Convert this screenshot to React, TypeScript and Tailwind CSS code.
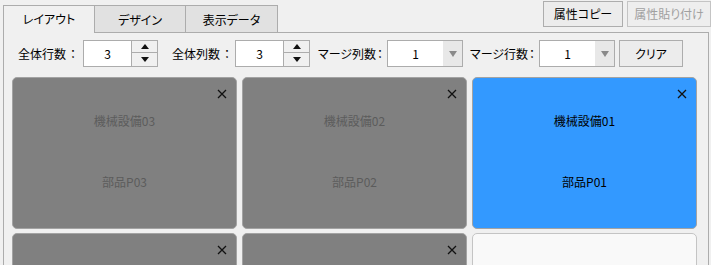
import React from "react";

const font = "font-['Noto_Sans_CJK_JP',sans-serif] [font-feature-settings:'palt']";

function Label({ text, className, gap }: { text: string; className: string; gap: string }) {
  return (
    <div className={`shrink-0 whitespace-nowrap ${className}`}>
      {text}
      <span className={gap}>：</span>
    </div>
  );
}

function Spinner({ value }: { value: string }) {
  return (
    <div className="flex h-[27px] w-[75px] shrink-0 border border-[#acacac] bg-white">
      <div className="flex flex-1 items-center justify-center text-[12px] text-black">{value}</div>
      <div className="flex w-[26px] flex-col border-l border-[#acacac] bg-[#f0f0f0]">
        <div className="flex h-[12px] items-center justify-center border-b border-[#acacac]">
          <svg width="8" height="5" viewBox="0 0 8 5"><path d="M0 5 L4 0 L8 5 Z" fill="#111" /></svg>
        </div>
        <div className="flex flex-1 items-center justify-center">
          <svg width="8" height="5" viewBox="0 0 8 5"><path d="M0 0 L4 5 L8 0 Z" fill="#111" /></svg>
        </div>
      </div>
    </div>
  );
}

function Combo({ value }: { value: string }) {
  return (
    <div className="flex h-[27px] w-[76px] shrink-0 border border-[#acacac] bg-white">
      <div className="flex flex-1 items-center justify-center text-[12px] text-black">{value}</div>
      <div className="flex w-[19px] items-center justify-center bg-[#e8e8e8]">
        <svg width="8" height="6" viewBox="0 0 8 6"><path d="M0 0 L8 0 L4 6 Z" fill="#8a8a8a" /></svg>
      </div>
    </div>
  );
}

function CloseX() {
  return (
    <svg width="10" height="10" viewBox="0 0 10 10">
      <path d="M1 1 L9 9 M9 1 L1 9" stroke="#111" strokeWidth="1.3" />
    </svg>
  );
}

function Card({ title, part, kind }: { title?: string; part?: string; kind: "gray" | "blue" | "empty" }) {
  const bg =
    kind === "gray"
      ? "bg-[#808080] border-[#a3a3a3]"
      : kind === "blue"
      ? "bg-[#3399ff] border-[#a3a3a3]"
      : "bg-[#f9f9f9] border-[#c4c4c4]";
  const txt = kind === "blue" ? "text-black" : "text-[#5c5c5c]";
  return (
    <div className={`relative flex h-[152px] flex-col items-center rounded-[5px] border ${bg}`}>
      {kind !== "empty" && (
        <div className="absolute right-[9px] top-[11px]">
          <CloseX />
        </div>
      )}
      {title && (
        <>
          <div className={`mt-[34px] h-[18px] text-[12px] leading-[18px] ${txt}`}>{title}</div>
          <div className={`mt-[43px] h-[18px] text-[12px] leading-[18px] ${txt}`}>{part}</div>
        </>
      )}
    </div>
  );
}

export default function App() {
  return (
    <div className={`h-[265px] w-[711px] overflow-hidden bg-[#f0f0f0] text-[12px] text-black ${font}`}>
      <div className="flex h-[32px] justify-between">
        <div className="flex items-start pl-[3px] pt-[5px]">
          <div className="relative z-10 -mb-px flex h-[28px] w-[92px] items-center justify-center border border-b-0 border-[#acacac] bg-[#f0f0f0] pb-[2px]">
            レイアウト
          </div>
          <div className="flex h-[27px] w-[91px] items-center justify-center border border-l-0 border-b-0 border-[#acacac] bg-[#e1e1e1] pt-[1px]">
            デザイン
          </div>
          <div className="flex h-[27px] w-[92px] items-center justify-center border border-l-0 border-b-0 border-[#acacac] bg-[#e1e1e1] pt-[1px]">
            表示データ
          </div>
        </div>
        <div className="flex items-start gap-[4px] pt-[1px]">
          <div className="flex h-[26px] w-[80px] items-center justify-center border border-[#adadad] bg-[#ececec]">
            属性コピー
          </div>
          <div className="flex h-[26px] w-[84px] items-center justify-center border border-[#c4c4c4] bg-[#eeeeee] text-[#a0a0a0]">
            属性貼り付け
          </div>
        </div>
      </div>
      <div className="ml-[3px] h-[260px] w-[706px] border border-[#acacac]">
        <div className="flex items-center pl-[14px] pt-[7px]">
          <Label className="w-[65px]" gap="ml-[4px]" text="全体行数" />
          <Spinner value="3" />
          <Label className="ml-[14px] w-[63px]" gap="ml-[4px]" text="全体列数" />
          <Spinner value="3" />
          <Label className="ml-[8px] w-[69px]" gap="ml-[1px]" text="マージ列数" />
          <Combo value="1" />
          <Label className="ml-[7px] w-[69px]" gap="ml-[1px]" text="マージ行数" />
          <Combo value="1" />
          <div className="ml-[4px] flex h-[27px] w-[64px] shrink-0 items-center justify-center border border-[#adadad] bg-[#ececec]">
            クリア
          </div>
        </div>
        <div className="mt-[10px] grid grid-cols-[225px_225px_225px] gap-x-[5px] gap-y-[4px] pl-[8px]">
          <Card kind="gray" title="機械設備03" part="部品P03" />
          <Card kind="gray" title="機械設備02" part="部品P02" />
          <Card kind="blue" title="機械設備01" part="部品P01" />
          <Card kind="gray" />
          <Card kind="gray" />
          <Card kind="empty" />
        </div>
      </div>
    </div>
  );
}
